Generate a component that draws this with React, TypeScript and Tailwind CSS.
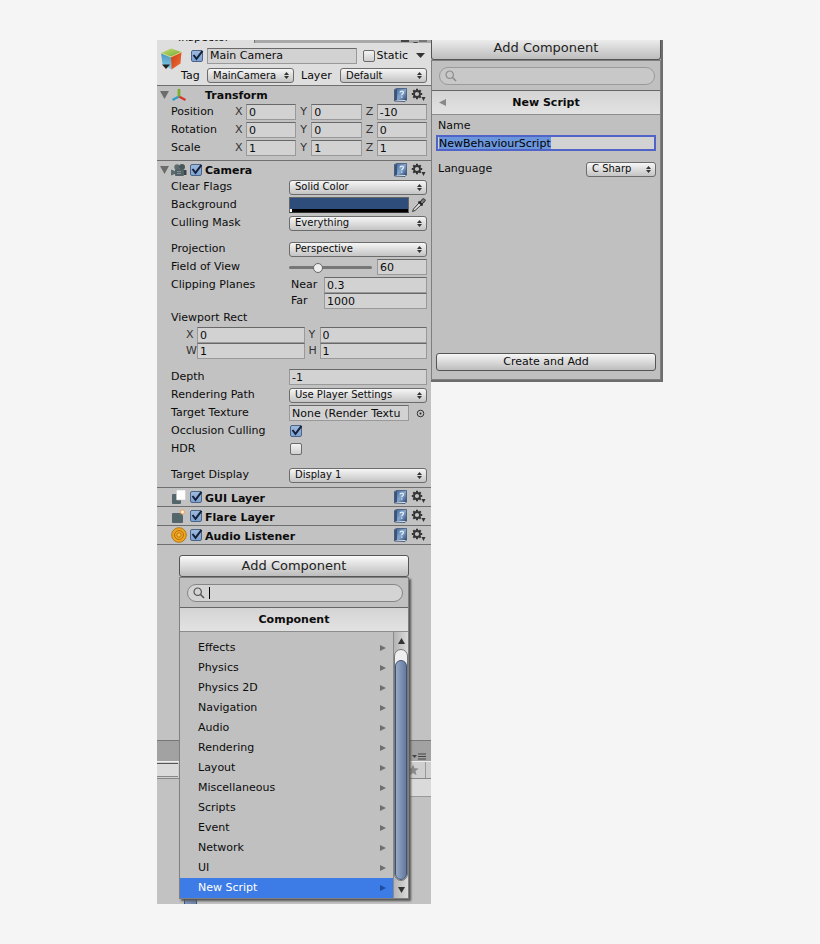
import { useEffect, useRef } from 'react'
import type { ReactNode } from 'react'

const COMPONENT_GROUPS = [
  'Effects',
  'Physics',
  'Physics 2D',
  'Navigation',
  'Audio',
  'Rendering',
  'Layout',
  'Miscellaneous',
  'Scripts',
  'Event',
  'Network',
  'UI',
  'New Script',
]

const TRANSFORM = [
  { label: 'Position', values: ['0', '0', '-10'] },
  { label: 'Rotation', values: ['0', '0', '0'] },
  { label: 'Scale', values: ['1', '1', '1'] },
]

/* ---------- Icons ---------- */

function CubeIcon() {
  return (
    <svg width="24" height="24" viewBox="0 0 24 24" className="max-w-none" aria-hidden="true">
      <defs>
        <linearGradient id="cubeLeft" x1="0" y1="0" x2="0" y2="1">
          <stop offset="0" stopColor="#4f93b8" />
          <stop offset="1" stopColor="#7fd0ee" />
        </linearGradient>
        <linearGradient id="cubeRight" x1="0" y1="0" x2="1" y2="1">
          <stop offset="0" stopColor="#c83a12" />
          <stop offset="1" stopColor="#f4713a" />
        </linearGradient>
        <linearGradient id="cubeTop" x1="0" y1="0" x2="1" y2="1">
          <stop offset="0" stopColor="#c9dc7a" />
          <stop offset="1" stopColor="#6da82c" />
        </linearGradient>
      </defs>
      <path d="M2 6 12 1.500 22.500 5 12 10z" fill="url(#cubeTop)" />
      <path d="M2 6 12 10l.5 12.500L3.500 17z" fill="url(#cubeLeft)" />
      <path d="M12 10 22.500 5l-1 11.500-9 6z" fill="url(#cubeRight)" />
      <path d="M2 6 12 10 22.500 5" fill="none" stroke="#e6e6a0" strokeWidth="0.700" />
      <path d="M3 17.500h8L7 22z" fill="#222" />
    </svg>
  )
}

function AxisIcon() {
  return (
    <svg width="16" height="16" viewBox="0 0 16 16" fill="none" strokeWidth="2.400" aria-hidden="true">
      <path d="M8 9.500V2" stroke="#7cae2a" />
      <path d="M8 9.500 1.500 13" stroke="#2f9dcc" />
      <path d="M8 9.500 14.500 13" stroke="#d8362a" />
      <path d="M8 9.500V2" stroke="#7cae2a" />
    </svg>
  )
}

function CameraIcon() {
  return (
    <svg width="16" height="16" viewBox="0 0 16 16" aria-hidden="true">
      <circle cx="6" cy="5" r="2.700" fill="#5c6b6e" />
      <circle cx="11" cy="5" r="3" fill="#4a585b" />
      <rect x="4" y="7" width="9" height="7" rx="1" fill="#526266" />
      <path d="M0 7.500 4 9v3l-4 1.500z" fill="#5c6b6e" />
      <path d="M13 8h2.500v5H13z" fill="#3c4648" />
      <path d="M6 9.500h4M6 11.500h4" stroke="#8b9a9d" strokeWidth="0.800" />
    </svg>
  )
}

function GuiLayerIcon() {
  return (
    <svg width="16" height="16" viewBox="0 0 16 16" aria-hidden="true">
      <rect x="1" y="5" width="9" height="10" rx="1" fill="#53666b" />
      <rect x="5.500" y="1" width="9" height="10" rx="0.500" fill="#fff" stroke="#c6c6c6" strokeWidth="0.600" />
    </svg>
  )
}

function FlareLayerIcon() {
  return (
    <svg width="16" height="16" viewBox="0 0 16 16" aria-hidden="true">
      <rect x="1" y="5" width="11" height="10" rx="1" fill="#53666b" />
      <path d="M11.500.5v7M8 4h7M9 1.500l5 5M14 1.500l-5 5" stroke="#e5a878" strokeWidth="0.600" />
      <circle cx="11.500" cy="4" r="2" fill="#fff0df" stroke="#f0a15c" strokeWidth="0.900" />
    </svg>
  )
}

function AudioListenerIcon() {
  return (
    <svg width="16" height="16" viewBox="0 0 16 16" aria-hidden="true">
      <circle cx="8" cy="8" r="7.300" fill="#f2a51e" stroke="#a8721a" strokeWidth="0.900" />
      <circle cx="8" cy="8" r="4.500" fill="none" stroke="#b0700c" strokeWidth="1" />
      <circle cx="8" cy="8" r="2.200" fill="#f9bd40" stroke="#b0700c" strokeWidth="0.900" />
    </svg>
  )
}

function BookIcon() {
  return (
    <svg width="13" height="14" viewBox="0 0 13 14" aria-hidden="true">
      <defs>
        <linearGradient id="book" x1="0" y1="0" x2="1" y2="1">
          <stop offset="0" stopColor="#4a6d9c" />
          <stop offset="0.500" stopColor="#86a6cc" />
          <stop offset="1" stopColor="#2f4f7c" />
        </linearGradient>
      </defs>
      <path d="M.5 1.500 3 .5h9.500v11.500L11 13.500.5 13z" fill="#dfe6ee" stroke="#2c405e" strokeWidth="0.800" />
      <path d="M3 .8h9.200v11.200H3z" fill="url(#book)" />
      <path d="M.8 1.700 3 .8v11.200L.8 12.800z" fill="#35547e" />
      <path
        d="M6 4.600c0-2 3.500-2 3.500 0 0 1.200-1.700 1.200-1.700 2.600M7.800 8.500v1.200"
        fill="none"
        stroke="#e8f1fb"
        strokeWidth="1.200"
      />
    </svg>
  )
}

function GearIcon() {
  return (
    <svg width="15" height="14" viewBox="0 0 15 14" aria-hidden="true">
      <circle cx="6" cy="6" r="3" fill="none" stroke="#333" strokeWidth="1.800" />
      <path
        d="M6 .8v1.700M6 9.500v1.700M.8 6h1.700M9.500 6h1.700M2.300 2.300l1.300 1.300M8.400 8.400l1.300 1.300M9.700 2.300 8.400 3.600M3.600 8.400 2.300 9.700"
        stroke="#333"
        strokeWidth="2"
      />
      <path d="M10.500 9h4l-2 4z" fill="#333" />
    </svg>
  )
}

function EyedropperIcon() {
  return (
    <svg width="16" height="16" viewBox="0 0 16 16" aria-hidden="true">
      <path d="M1.500 14.500 2.500 12l6-6.500 2 2-6.500 6z" fill="#e4e4e4" stroke="#333" strokeWidth="1" />
      <path d="m7.500 4.500 4 4" stroke="#222" strokeWidth="1.800" />
      <path d="m9 5 2.500-3c1-1.200 3.700.8 2.500 2.300L11 7z" fill="#777" stroke="#222" strokeWidth="0.900" />
    </svg>
  )
}

function SearchIcon({ color }: { color: string }) {
  return (
    <svg width="12" height="12" viewBox="0 0 12 12" fill="none" stroke={color} strokeWidth="1.200" aria-hidden="true">
      <circle cx="4.700" cy="4.700" r="3.700" />
      <path d="m7.500 7.500 3.500 3.500" strokeWidth="1.600" />
    </svg>
  )
}

function TabMenuIcon() {
  return (
    <svg width="14" height="7" viewBox="0 0 14 7" aria-hidden="true">
      <path d="M0 2h5L2.500 5z" fill="#444" />
      <path d="M6 1h8M6 3.500h8M6 6h8" stroke="#444" />
    </svg>
  )
}

/* ---------- Controls ---------- */

function Toggle({ label, checked }: { label: string; checked?: boolean }) {
  return (
    <span className="grid size-3 shrink-0">
      <input
        type="checkbox"
        aria-label={label}
        defaultChecked={checked}
        className="peer col-start-1 row-start-1 size-3 appearance-none rounded-xs border border-[#6a6a6a] bg-linear-to-b from-[#f4f4f4] to-[#cfcfcf] checked:border-[#4c6485] checked:from-[#9db8dc] checked:to-[#7ea2d4]"
      />
      <svg
        viewBox="0 0 12 12"
        className="pointer-events-none invisible col-start-1 row-start-1 size-3 overflow-visible peer-checked:visible"
        aria-hidden="true"
      >
        <path d="M2.500 5 5.500 8.800 11.500.8" fill="none" stroke="#14223c" strokeWidth="2" />
      </svg>
    </span>
  )
}

function Field({ label, value }: { label: string; value: string }) {
  return (
    <input
      aria-label={label}
      defaultValue={value}
      className="h-4 w-full min-w-0 flex-1 border border-[#999] border-t-[#686868] bg-[#d2d2d2] px-0.5 text-[11px] leading-3 outline-none"
    />
  )
}

function Popup({ label, value, className = 'flex-1' }: { label: string; value: string; className?: string }) {
  return (
    <span className={`grid min-w-0 items-center ${className}`}>
      <select
        aria-label={label}
        className="col-start-1 row-start-1 h-[15px] w-full appearance-none rounded-[3px] border border-[#6c6c6c] bg-linear-to-b from-[#f6f6f6] to-[#c4c4c4] pl-[5px] text-[10px] leading-3 outline-none"
      >
        <option>{value}</option>
      </select>
      <svg
        width="5"
        height="7"
        viewBox="0 0 5 7"
        className="pointer-events-none col-start-1 row-start-1 mr-[5px] justify-self-end"
        aria-hidden="true"
      >
        <path d="M0 3h5L2.500 0zM0 4h5L2.500 7z" fill="#333" />
      </svg>
    </span>
  )
}

function Row({ label, children }: { label: string; children?: ReactNode }) {
  return (
    <div className="flex h-[18px] items-center pr-1 pl-3.5">
      <span className="w-[118px] shrink-0">{label}</span>
      {children}
    </div>
  )
}

function ComponentHeader({
  title,
  icon,
  open,
  toggle,
}: {
  title: string
  icon: ReactNode
  open?: boolean
  toggle?: boolean
}) {
  return (
    <div className={`flex items-center pr-[5px] pl-[3px] ${open ? 'h-[17px]' : 'h-[18px]'}`}>
      <span className="w-[11px] shrink-0">
        {open && (
          <svg width="9" height="8" viewBox="0 0 9 8" aria-hidden="true">
            <path d="M0 0h9L4.500 8z" fill="#6c6c6c" />
          </svg>
        )}
      </span>
      {icon}
      <span className="ml-[3px] w-[15px] shrink-0">{toggle && <Toggle label={title} checked />}</span>
      <h2 className="flex-1 pt-[3px] font-bold">{title}</h2>
      <button aria-label={`${title} help`}>
        <BookIcon />
      </button>
      <button aria-label={`${title} settings`} className="ml-1">
        <GearIcon />
      </button>
    </div>
  )
}

function SearchBox({ active }: { active?: boolean }) {
  return (
    <div className="pt-1.5 pr-[5px] pb-[5px] pl-[7px]">
      <div
        className={`flex h-[18px] items-center rounded-full border pl-[5px] ${
          active ? 'border-[#858585] bg-[#d4d4d4]' : 'border-[#9a9a9a] bg-[#c8c8c8]'
        }`}
      >
        <SearchIcon color={active ? '#555' : '#8c8c8c'} />
        {active && <span className="ml-1 h-3 w-px bg-black" />}
        <input aria-label="Search components" className="min-w-0 flex-1 text-[11px] outline-none" />
      </div>
    </div>
  )
}

/* ---------- Panels ---------- */

function ObjectHeader() {
  return (
    <header className="bg-[#dedede]">
      <div className="flex h-[3px] justify-between overflow-hidden bg-[#a8a8a8]">
        <span className="flex w-[98px] items-end border-r border-[#777] bg-[#dedede] pl-[21px] leading-[10px]">
          Inspector
        </span>
        <span className="mr-1 flex gap-1">
          <span className="h-0.5 w-2 bg-[#444]" />
          <TabMenuIcon />
        </span>
      </div>
      <div className="flex h-[42px] pr-1 pl-0.5">
        <div className="w-[22px] shrink-0 pt-1">
          <CubeIcon />
        </div>
        <div className="min-w-0 flex-1">
          <div className="flex h-[25px] items-center">
            <span className="mr-1 ml-2.5">
              <Toggle label="Active" checked />
            </span>
            <Field label="Object name" value="Main Camera" />
            <label className="ml-1.5 flex items-center gap-0.5">
              <Toggle label="Static" />
              Static
            </label>
            <button aria-label="Static flags" className="mr-0.5 ml-2">
              <svg width="9" height="5" viewBox="0 0 9 5" aria-hidden="true">
                <path d="M0 0h9L4.500 5z" fill="#333" />
              </svg>
            </button>
          </div>
          <div className="flex h-[15px] items-center">
            <span className="w-[26px] shrink-0">Tag</span>
            <Popup label="Tag" value="MainCamera" />
            <span className="ml-1.5 w-10 shrink-0 pl-px">Layer</span>
            <Popup label="Layer" value="Default" />
          </div>
        </div>
      </div>
    </header>
  )
}

function Transform() {
  return (
    <section className="border-t border-[#6f6f6f] pb-[3px]">
      <ComponentHeader title="Transform" icon={<AxisIcon />} open />
      {TRANSFORM.map(row => (
        <div key={row.label} className="flex h-[18px] items-center pr-1 pl-3.5">
          <span className="w-16 shrink-0">{row.label}</span>
          <div className="grid flex-1 grid-cols-3 gap-1">
            {['X', 'Y', 'Z'].map((axis, i) => (
              <div key={axis} className="flex items-center">
                <span className="w-[11px] shrink-0 text-[#333]">{axis}</span>
                <Field label={`${row.label} ${axis}`} value={row.values[i]} />
              </div>
            ))}
          </div>
        </div>
      ))}
    </section>
  )
}

function Camera() {
  return (
    <section className="border-t border-[#6f6f6f] pb-[3px]">
      <ComponentHeader title="Camera" icon={<CameraIcon />} open toggle />
      <Row label="Clear Flags">
        <Popup label="Clear Flags" value="Solid Color" />
      </Row>
      <Row label="Background">
        <button
          aria-label="Background color"
          className="h-4 flex-1 border border-[#666] border-b-[#333] bg-[#2f4d7a]"
        >
          <span className="mt-[11px] flex h-[3px] bg-black">
            <span className="w-0.5 bg-white" />
          </span>
        </button>
        <button aria-label="Pick color" className="ml-0.5">
          <EyedropperIcon />
        </button>
      </Row>
      <Row label="Culling Mask">
        <Popup label="Culling Mask" value="Everything" />
      </Row>
      <div className="pt-2">
        <Row label="Projection">
          <Popup label="Projection" value="Perspective" />
        </Row>
        <Row label="Field of View">
          <input
            type="range"
            aria-label="Field of View"
            min={1}
            max={179}
            defaultValue={60}
            className="mr-[5px] h-3 min-w-0 flex-1 appearance-none bg-transparent [&::-webkit-slider-runnable-track]:h-[3px] [&::-webkit-slider-runnable-track]:rounded-full [&::-webkit-slider-runnable-track]:bg-[#777] [&::-webkit-slider-thumb]:-mt-[3px] [&::-webkit-slider-thumb]:size-2.5 [&::-webkit-slider-thumb]:appearance-none [&::-webkit-slider-thumb]:rounded-full [&::-webkit-slider-thumb]:border [&::-webkit-slider-thumb]:border-[#666] [&::-webkit-slider-thumb]:bg-[#eee]"
          />
          <span className="flex w-[50px]">
            <Field label="Field of View value" value="60" />
          </span>
        </Row>
        <Row label="Clipping Planes">
          <span className="w-[35px] pl-0.5">Near</span>
          <Field label="Near" value="0.3" />
        </Row>
        <div className="-mt-px flex h-4 items-center pr-1 pl-[132px]">
          <span className="w-[35px] pl-0.5">Far</span>
          <Field label="Far" value="1000" />
        </div>
        <Row label="Viewport Rect" />
        <div className="grid grid-cols-2 gap-x-1 pr-1 pl-[29px]">
          {[
            ['X', '0'],
            ['Y', '0'],
            ['W', '1'],
            ['H', '1'],
          ].map(([name, value]) => (
            <div key={name} className="flex items-center">
              <span className="w-[11px] shrink-0 text-[#333]">{name}</span>
              <Field label={`Viewport ${name}`} value={value} />
            </div>
          ))}
        </div>
      </div>
      <div className="pt-[9px]">
        <Row label="Depth">
          <Field label="Depth" value="-1" />
        </Row>
        <Row label="Rendering Path">
          <Popup label="Rendering Path" value="Use Player Settings" />
        </Row>
        <Row label="Target Texture">
          <Field label="Target Texture" value="None (Render Textu" />
          <button aria-label="Select texture" className="mr-0.5 ml-[7px]">
            <svg width="9" height="9" viewBox="0 0 9 9" aria-hidden="true">
              <circle cx="4.500" cy="4.500" r="3.300" fill="none" stroke="#333" />
              <circle cx="4.500" cy="4.500" r="1" fill="#222" />
            </svg>
          </button>
        </Row>
        <Row label="Occlusion Culling">
          <span className="pl-px">
            <Toggle label="Occlusion Culling" checked />
          </span>
        </Row>
        <Row label="HDR">
          <span className="pl-px">
            <Toggle label="HDR" />
          </span>
        </Row>
      </div>
      <div className="pt-2">
        <Row label="Target Display">
          <Popup label="Target Display" value="Display 1" />
        </Row>
      </div>
    </section>
  )
}

function ComponentMenu() {
  return (
    <div className="col-start-1 row-start-1 mx-auto mt-2.5 mb-[5px] w-[230px] max-w-full">
      <button className="block h-[22px] w-full rounded-[3px] border border-[#555] bg-linear-to-b from-[#fafafa] to-[#bdbdbd] text-[13px] text-[#222]">
        Add Component
      </button>
      <div className="border border-[#808080] bg-[#c0c0c0] shadow-[2px_2px_2px_#555]">
        <SearchBox active />
        <h3 className="flex h-[25px] items-center justify-center border-y border-t-[#666] border-b-[#8c8c8c] bg-linear-to-b from-[#d4d4d4] to-[#e2e2e2] font-bold">
          Component
        </h3>
        <div className="flex">
          <ul className="flex-1 pt-1.5">
            {COMPONENT_GROUPS.map(name => (
              <li key={name}>
                <button
                  className={`flex h-5 w-full items-center justify-between pr-[7px] pl-[18px] ${
                    name === 'New Script' ? 'bg-[#3d7ce6] text-white' : ''
                  }`}
                >
                  {name}
                  <svg
                    width="6"
                    height="6"
                    viewBox="0 0 6 6"
                    className={name === 'New Script' ? 'fill-[#1f4c9c]' : 'fill-[#6e6e6e]'}
                    aria-hidden="true"
                  >
                    <path d="M0 0v6l6-3z" />
                  </svg>
                </button>
              </li>
            ))}
          </ul>
          <div className="flex w-[15px] flex-col border-l border-[#8a8a8a] bg-linear-to-r from-[#b4b4b4] to-[#dadada]">
            <button aria-label="Scroll up" className="flex h-[17px] items-center justify-center">
              <svg width="7" height="6" viewBox="0 0 7 6" aria-hidden="true">
                <path d="M0 6h7L3.500 0z" fill="#333" />
              </svg>
            </button>
            <div className="flex flex-1 flex-col rounded-full border border-[#777] bg-[#eee] pt-2.5">
              <div className="flex-1 rounded-full border border-[#3e5272] bg-linear-to-r from-[#98a9c6] to-[#64799f]" />
            </div>
            <button aria-label="Scroll down" className="flex h-[17px] items-center justify-center">
              <svg width="7" height="6" viewBox="0 0 7 6" aria-hidden="true">
                <path d="M0 0h7L3.500 6z" fill="#333" />
              </svg>
            </button>
          </div>
        </div>
      </div>
    </div>
  )
}

// Strips of the docked window that show on either side of the menu
function DockedWindow() {
  return (
    <div className="col-start-1 row-start-1 flex flex-col justify-end">
      <div className="flex h-[21px] items-end justify-end border-t border-[#777] bg-[#a2a2a2] pr-[5px] pb-px">
        <TabMenuIcon />
      </div>
      <div className="flex h-[18px] justify-between border-y border-t-[#eee] border-b-[#888] bg-[#cfcfcf]">
        <span className="my-px w-[21px] border-y border-t-[#555] border-b-[#888] bg-[#dadada]" />
        <span className="flex items-center">
          <svg width="12" height="12" viewBox="0 0 12 12" aria-hidden="true">
            <path d="m6 .5 1.600 3.800 4 .3-3.100 2.600 1 4L6 9l-3.500 2.200 1-4L.4 4.600l4-.3z" fill="#8a8a8a" />
          </svg>
          <span className="ml-1.5 h-4 w-1.5 border-l border-[#999]" />
        </span>
      </div>
      <div className="ml-[250px] h-[18px] border-b border-[#999] bg-[#dadada]" />
      <div className="flex h-[107px] items-end pl-[27px]">
        <span className="h-[30px] w-[13px] border-x border-[#3e5272] bg-linear-to-r from-[#8093b6] to-[#6f84ab]" />
      </div>
    </div>
  )
}

function Inspector() {
  return (
    <main className="min-w-0 bg-[#c2c2c2]">
      <ObjectHeader />
      <Transform />
      <Camera />
      <section className="border-t border-[#6f6f6f]">
        <ComponentHeader title="GUI Layer" icon={<GuiLayerIcon />} toggle />
      </section>
      <section className="border-t border-[#6f6f6f]">
        <ComponentHeader title="Flare Layer" icon={<FlareLayerIcon />} toggle />
      </section>
      <section className="border-y border-[#6f6f6f]">
        <ComponentHeader title="Audio Listener" icon={<AudioListenerIcon />} toggle />
      </section>
      <div className="grid">
        <DockedWindow />
        <ComponentMenu />
      </div>
    </main>
  )
}

function NewScriptPanel() {
  const nameRef = useRef<HTMLInputElement>(null)

  useEffect(() => {
    nameRef.current?.focus()
    nameRef.current?.select()
  }, [])

  return (
    <aside className="min-w-0 border-r-2 border-b-2 border-[#6e6e6e] bg-[#c0c0c0]">
      <button className="block h-5 w-full rounded-b-[3px] border border-t-0 border-[#555] bg-linear-to-b from-[#ececec] to-[#bdbdbd] pb-[3px] text-[13px] text-[#222]">
        Add Component
      </button>
      <div className="border border-[#7f7f7f]">
        <SearchBox />
        <h3 className="flex h-[25px] items-center border-y border-t-[#666] border-b-[#8c8c8c] bg-linear-to-b from-[#d4d4d4] to-[#e2e2e2] px-[7px] font-bold">
          <button aria-label="Back">
            <svg width="7" height="7" viewBox="0 0 7 7" aria-hidden="true">
              <path d="M7 0v7L0 3.500z" fill="#888" />
            </svg>
          </button>
          <span className="flex-1 pr-[7px] text-center">New Script</span>
        </h3>
        <div className="flex h-[264px] flex-col px-1 pt-[3px] pb-2">
          <label htmlFor="scriptName" className="pl-0.5 leading-4">
            Name
          </label>
          <input
            id="scriptName"
            ref={nameRef}
            defaultValue="NewBehaviourScript"
            className="mt-px h-4 w-full border-2 border-[#5064c8] bg-[#d2d2d2] px-px text-[11px] leading-3 outline-none selection:bg-[#6b96dc] selection:text-black"
          />
          <div className="mt-[9px] flex h-[18px] items-center justify-between pl-0.5">
            <span>Language</span>
            <Popup label="Language" value="C Sharp" className="w-[70px]" />
          </div>
          <button className="mt-auto h-[18px] rounded-[3px] border border-[#555] bg-linear-to-b from-[#f6f6f6] to-[#bdbdbd]">
            Create and Add
          </button>
        </div>
      </div>
    </aside>
  )
}

export default function App() {
  return (
    <div className="min-h-screen bg-[#f5f5f5] px-4 py-10 font-['DejaVu_Sans',Verdana,sans-serif] text-[11px] leading-4 text-[#0c0c0c]">
      <div className="mx-auto grid max-w-[506px] grid-cols-[274fr_232fr] items-start">
        <Inspector />
        <NewScriptPanel />
      </div>
    </div>
  )
}
